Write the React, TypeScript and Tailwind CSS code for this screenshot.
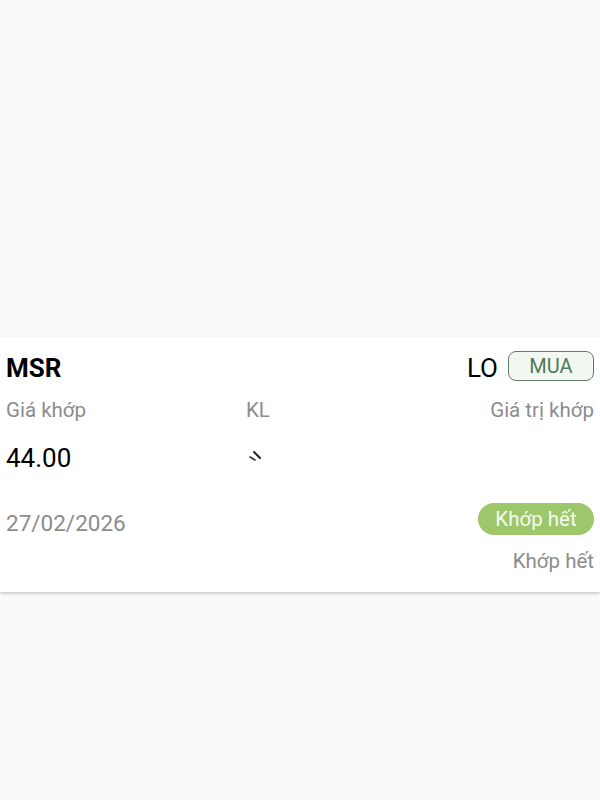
import React from "react";

const OrderCard = () => {
  return (
    <div className="bg-white pt-[14px] pb-[19px] px-[6px] shadow-[0_2px_3px_rgba(0,0,0,0.18)]">
      <div className="flex h-[30px] items-center justify-between">
        <span className="mt-[3px] text-[26px] leading-[30px] font-bold text-black">MSR</span>
        <div className="flex items-center gap-[10px]">
          <span className="mt-[3px] text-[26px] leading-[30px] text-black">LO</span>
          <span className="flex h-[30px] w-[86px] items-center justify-center rounded-[8px] border-[1.5px] border-[#5f7d63] bg-[#f3f7f2] text-[20px] text-[#4f7a57]">
            MUA
          </span>
        </div>
      </div>

      <div className="mt-[17px] flex h-[24px] items-center text-[20.5px] text-[#8c8c8c]">
        <span className="w-[240px]">Giá khớp</span>
        <span>KL</span>
        <span className="ml-auto">Giá trị khớp</span>
      </div>

      <div className="mt-[21px] flex h-[28px] items-center">
        <span className="mt-[2px] w-[240px] text-[26px] leading-[30px] text-black">44.00</span>
        <svg width="22" height="22" viewBox="0 0 22 22" className="mt-[4px]">
          <path d="M8 4 L14 10" stroke="#222" strokeWidth="2" strokeLinecap="round" />
          <path d="M4 9 L9 12" stroke="#333" strokeWidth="1.6" strokeLinecap="round" />
        </svg>
      </div>

      <div className="mt-[32px] flex h-[32px] items-center justify-between">
        <span className="mt-[9px] text-[22.5px] text-[#8c8c8c]">27/02/2026</span>
        <span className="flex h-[32px] w-[116px] items-center justify-center rounded-full bg-[#9cc76a] text-[20.5px] text-[#f7fbef]">
          Khớp hết
        </span>
      </div>

      <div className="mt-[14px] flex h-[24px] items-center justify-end text-[20.5px] text-[#8c8c8c]">
        Khớp hết
      </div>
    </div>
  );
};

export default function App() {
  return (
    <div
      className="flex min-h-[800px] w-[600px] flex-col bg-[#fafafa]"
      style={{ fontFamily: "Roboto, 'Noto Sans', sans-serif" }}
    >
      <div className="h-[337px]" />
      <OrderCard />
    </div>
  );
}
